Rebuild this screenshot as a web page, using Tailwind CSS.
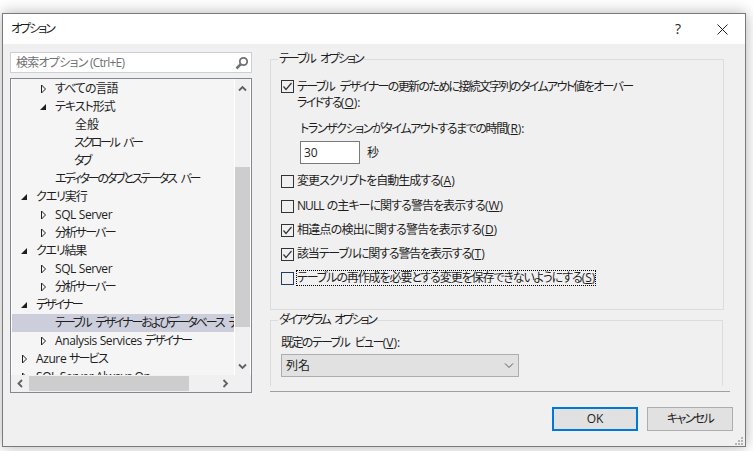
<!DOCTYPE html>
<html lang="ja">
<head>
  <meta charset="UTF-8">
  <title>オプション</title>
  <script src="https://cdn.jsdelivr.net/npm/@tailwindcss/browser@4"></script>
</head>
<body class="bg-white w-[753px] h-[451px] overflow-hidden">
  <div class="ml-[2px] mt-[13px] w-[744px] h-[434px] border border-[#7a7a7a] bg-[#f0f0f0] shadow-[0_0_14px_rgba(0,0,0,0.3)] text-[12px] leading-[16px] text-[#1e1e1e] font-['Open_Sans','Noto_Sans_CJK_JP',sans-serif] [font-feature-settings:'palt'] relative">

    <div class="h-[30px] bg-white flex items-center pl-[8px]">
      <span class="flex-1 tracking-[-2px]">オプション</span>
      <span class="w-[12px] text-[14px] font-medium text-center mr-[33px]">?</span>
      <svg class="w-[11px] h-[11px] mr-[17px]" viewBox="0 0 11 11" fill="none" stroke="#222" stroke-width="1"><path d="M0.5 0.5L10.5 10.5M10.5 0.5L0.5 10.5"/></svg>
    </div>

    <div class="flex pl-[7px] pt-[8px]">
      <!-- left: search + tree -->
      <div class="w-[242px]">
        <div class="h-[21px] bg-white border border-[#cccedb] flex items-center pl-[5px] pr-[2px] text-[#717171]">
          <span class="flex-1 whitespace-nowrap tracking-[-0.75px]">検索オプション (Ctrl+E)</span>
          <svg class="w-[14px] h-[14px]" viewBox="0 0 14 14" fill="none" stroke="#717171"><circle cx="8.5" cy="5.5" r="3.7" stroke-width="1.8"/><path d="M5.8 8.2L1.5 12.5" stroke-width="2.6"/></svg>
        </div>

        <div class="mt-[5px] h-[315px] border border-[#828790] bg-[#f0f0f0] relative">
          <div class="flex h-[296px] bg-white">
            <div class="w-[222px] ml-[1px] overflow-hidden bg-[#f5f5f5] pt-[1px] whitespace-nowrap">
              <div class="h-[18px] flex items-center pl-[29px] tracking-[-1px]"><svg class="w-[7px] h-[10px] mr-[7px] shrink-0" viewBox="0 0 7 10" fill="none" stroke="#1e1e1e"><path d="M.5 1v8l4-4z"/></svg>すべての言語</div>
              <div class="h-[18px] flex items-center pl-[28px] tracking-[-1px]"><svg class="w-[7px] h-[10px] mr-[8px] shrink-0" viewBox="0 0 7 10" fill="#1e1e1e"><path d="M0 8h6V2z"/></svg>テキスト形式</div>
              <div class="h-[18px] flex items-center pl-[63px]">全般</div>
              <div class="h-[18px] flex items-center pl-[62px] tracking-[-2.4px] [word-spacing:4px] whitespace-pre"><span>スクロール</span><span> バー</span></div>
              <div class="h-[18px] flex items-center pl-[62px] tracking-[-2.5px]">タブ</div>
              <div class="h-[18px] flex items-center pl-[43px] tracking-[-2.2px] [word-spacing:4px] whitespace-pre"><span>エディターのタブとステータス</span><span> バー</span></div>
              <div class="h-[18px] flex items-center pl-[9px] tracking-[-1.1px]"><svg class="w-[7px] h-[10px] mr-[8px] shrink-0" viewBox="0 0 7 10" fill="#1e1e1e"><path d="M0 8h6V2z"/></svg>クエリ実行</div>
              <div class="h-[18px] flex items-center pl-[29px] tracking-[-0.4px]"><svg class="w-[7px] h-[10px] mr-[7px] shrink-0" viewBox="0 0 7 10" fill="none" stroke="#1e1e1e"><path d="M.5 1v8l4-4z"/></svg>SQL Server</div>
              <div class="h-[18px] flex items-center pl-[29px] tracking-[-1.7px]"><svg class="w-[7px] h-[10px] mr-[7px] shrink-0" viewBox="0 0 7 10" fill="none" stroke="#1e1e1e"><path d="M.5 1v8l4-4z"/></svg>分析サーバー</div>
              <div class="h-[18px] flex items-center pl-[9px] tracking-[-1.2px]"><svg class="w-[7px] h-[10px] mr-[8px] shrink-0" viewBox="0 0 7 10" fill="#1e1e1e"><path d="M0 8h6V2z"/></svg>クエリ結果</div>
              <div class="h-[18px] flex items-center pl-[29px] tracking-[-0.4px]"><svg class="w-[7px] h-[10px] mr-[7px] shrink-0" viewBox="0 0 7 10" fill="none" stroke="#1e1e1e"><path d="M.5 1v8l4-4z"/></svg>SQL Server</div>
              <div class="h-[18px] flex items-center pl-[29px] tracking-[-1.7px]"><svg class="w-[7px] h-[10px] mr-[7px] shrink-0" viewBox="0 0 7 10" fill="none" stroke="#1e1e1e"><path d="M.5 1v8l4-4z"/></svg>分析サーバー</div>
              <div class="h-[18px] flex items-center pl-[9px] tracking-[-2.2px]"><svg class="w-[7px] h-[10px] mr-[8px] shrink-0" viewBox="0 0 7 10" fill="#1e1e1e"><path d="M0 8h6V2z"/></svg>デザイナー</div>
              <div class="h-[18px] flex items-center pl-[43px] bg-[#cccedb] tracking-[-2.1px] [word-spacing:4px] whitespace-pre">テーブル デザイナーおよびデータベース デザイナー</div>
              <div class="h-[18px] flex items-center pl-[29px]"><svg class="w-[7px] h-[10px] mr-[7px] shrink-0" viewBox="0 0 7 10" fill="none" stroke="#1e1e1e"><path d="M.5 1v8l4-4z"/></svg><span class="tracking-[-0.4px] whitespace-pre">Analysis Services </span><span class="tracking-[-2px]">デザイナー</span></div>
              <div class="h-[18px] flex items-center pl-[10px]"><svg class="w-[7px] h-[10px] mr-[7px] shrink-0" viewBox="0 0 7 10" fill="none" stroke="#1e1e1e"><path d="M.5 1v8l4-4z"/></svg><span class="tracking-[-0.4px] whitespace-pre">Azure </span><span class="tracking-[-1.7px]">サービス</span></div>
              <div class="h-[18px] flex items-center pl-[10px] tracking-[-0.4px]"><svg class="w-[7px] h-[10px] mr-[7px] shrink-0" viewBox="0 0 7 10" fill="none" stroke="#1e1e1e"><path d="M.5 1v8l4-4z"/></svg>SQL Server Always On</div>
            </div>
            <!-- vertical scrollbar -->
            <div class="w-[15px] ml-[1px] bg-[#f0f0f0] flex flex-col items-center">
              <svg class="w-[15px] h-[15px] mt-[2px]" viewBox="0 0 15 15" fill="none" stroke="#606060" stroke-width="1.8"><path d="M4 9.5L7.5 6L11 9.5"/></svg>
              <div class="w-[15px] h-[160px] mt-[71px] bg-[#cdcdcd]"></div>
              <svg class="w-[15px] h-[15px] mt-[32px]" viewBox="0 0 15 15" fill="none" stroke="#606060" stroke-width="1.8"><path d="M4 5.5L7.5 9L11 5.5"/></svg>
            </div>
          </div>
          <!-- horizontal scrollbar -->
          <div class="h-[16px] flex items-center ml-[1px] bg-[#f0f0f0]">
            <svg class="w-[17px] h-[15px]" viewBox="0 0 17 15" fill="none" stroke="#606060" stroke-width="1.8"><path d="M10 4L6.5 7.5L10 11"/></svg>
            <div class="w-[160px] h-[15px] bg-[#cdcdcd]"></div>
            <svg class="w-[15px] h-[15px] ml-[29px]" viewBox="0 0 15 15" fill="none" stroke="#606060" stroke-width="1.8"><path d="M5.5 4L9 7.5L5.5 11"/></svg>
          </div>
        </div>
      </div>

      <!-- right: options -->
      <div class="w-[463px] ml-[18px] -mt-[1px]">
        <fieldset class="w-[454px] h-[259px] border border-[#dcdcdc] pl-[10px]">
          <legend class="-ml-[3px] px-[1px] tracking-[-2px] [word-spacing:4px] whitespace-pre">テーブル オプション</legend>
          <label class="flex mt-[12px] whitespace-nowrap">
            <svg class="w-[13px] h-[13px] mt-[1px] mr-[3px] shrink-0" viewBox="0 0 13 13" fill="none" stroke="#333"><rect x=".5" y=".5" width="12" height="12"/><path d="M2.5 6.5L5 9.5L10.5 3" stroke-width="1.2"/></svg>
            <span class="tracking-[-1.65px] [word-spacing:4px] whitespace-pre">テーブル デザイナーの更新のために接続文字列のタイムアウト値をオーバー<br>ライドする<span class="tracking-normal">(<u>O</u>):</span></span>
          </label>
          <div class="ml-[19px] mt-[10px] tracking-[-1.4px]">トランザクションがタイムアウトするまでの時間<span class="tracking-normal">(<u>R</u>):</span></div>
          <div class="ml-[19px] mt-[4px] flex items-center">
            <div class="w-[60px] h-[23px] bg-white border border-[#7a7a7a] pl-[3px] flex items-center">30</div>
            <span class="ml-[7px]">秒</span>
          </div>
          <label class="flex mt-[9px] items-center h-[16px]">
            <svg class="w-[13px] h-[13px] mr-[3px] shrink-0" viewBox="0 0 13 13" fill="none" stroke="#333"><rect x=".5" y=".5" width="12" height="12"/></svg>
            <span class="tracking-[-0.95px]">変更スクリプトを自動生成する<span class="tracking-normal">(<u>A</u>)</span></span>
          </label>
          <label class="flex mt-[9px] items-center h-[16px]">
            <svg class="w-[13px] h-[13px] mr-[3px] shrink-0" viewBox="0 0 13 13" fill="none" stroke="#333"><rect x=".5" y=".5" width="12" height="12"/></svg>
            <span class="tracking-[-0.95px] [word-spacing:1px]">NULL の主キーに関する警告を表示する<span class="tracking-normal">(<u>W</u>)</span></span>
          </label>
          <label class="flex mt-[8px] items-center h-[16px]">
            <svg class="w-[13px] h-[13px] mr-[3px] shrink-0" viewBox="0 0 13 13" fill="none" stroke="#333"><rect x=".5" y=".5" width="12" height="12"/><path d="M2.5 6.5L5 9.5L10.5 3" stroke-width="1.2"/></svg>
            <span class="tracking-[-0.77px]">相違点の検出に関する警告を表示する<span class="tracking-normal">(<u>D</u>)</span></span>
          </label>
          <label class="flex mt-[8px] items-center h-[16px]">
            <svg class="w-[13px] h-[13px] mr-[3px] shrink-0" viewBox="0 0 13 13" fill="none" stroke="#333"><rect x=".5" y=".5" width="12" height="12"/><path d="M2.5 6.5L5 9.5L10.5 3" stroke-width="1.2"/></svg>
            <span class="tracking-[-1.15px]">該当テーブルに関する警告を表示する<span class="tracking-normal">(<u>T</u>)</span></span>
          </label>
          <label class="flex mt-[8px] items-center h-[16px]">
            <svg class="w-[13px] h-[13px] mr-[2px] shrink-0" viewBox="0 0 13 13" fill="none" stroke="#1f3f60"><rect x=".5" y=".5" width="12" height="12"/></svg>
            <span class="border border-dotted border-black leading-[14px] tracking-[-1.1px]">テーブルの再作成を必要とする変更を保存できないようにする<span class="tracking-normal">(<u>S</u>)</span></span>
          </label>
        </fieldset>

        <fieldset class="w-[453px] h-[74px] mt-[2px] border border-b-0 border-[#dcdcdc] pl-[10px]">
          <legend class="-ml-[3px] px-[1px] tracking-[-2.3px] [word-spacing:4px] whitespace-pre">ダイアグラム オプション</legend>
          <div class="mt-[7px] tracking-[-1.6px] [word-spacing:4px] whitespace-pre">既定のテーブル ビュー<span class="tracking-normal">(<u>V</u>):</span></div>
          <div class="w-[238px] h-[23px] mt-[3px] bg-[#e1e1e1] border border-[#adadad] flex items-center pl-[4px] pr-[4px]">
            <span class="flex-1">列名</span>
            <svg class="w-[10px] h-[6px]" viewBox="0 0 10 6" fill="none" stroke="#555"><path d="M1 .5L5 4.5L9 .5"/></svg>
          </div>
        </fieldset>

        <div class="w-[460px] h-[1px] mt-[5px] bg-[#a0a0a0]"></div>

        <div class="flex justify-end gap-[9px] mt-[15px]">
          <button class="w-[86px] h-[24px] bg-[#e1e1e1] border-2 border-[#0078d7]">OK</button>
          <button class="w-[86px] h-[24px] bg-[#e1e1e1] border border-[#adadad] tracking-[-1.6px]">キャンセル</button>
        </div>
      </div>
    </div>

    <svg class="absolute right-[2px] bottom-[1px] w-[8px] h-[8px]" viewBox="0 0 8 8" fill="#b5b5b5"><rect x="6" y="0" width="2" height="2"/><rect x="3" y="3" width="2" height="2"/><rect x="6" y="3" width="2" height="2"/><rect x="0" y="6" width="2" height="2"/><rect x="3" y="6" width="2" height="2"/><rect x="6" y="6" width="2" height="2"/></svg>
  </div>
</body>
</html>
